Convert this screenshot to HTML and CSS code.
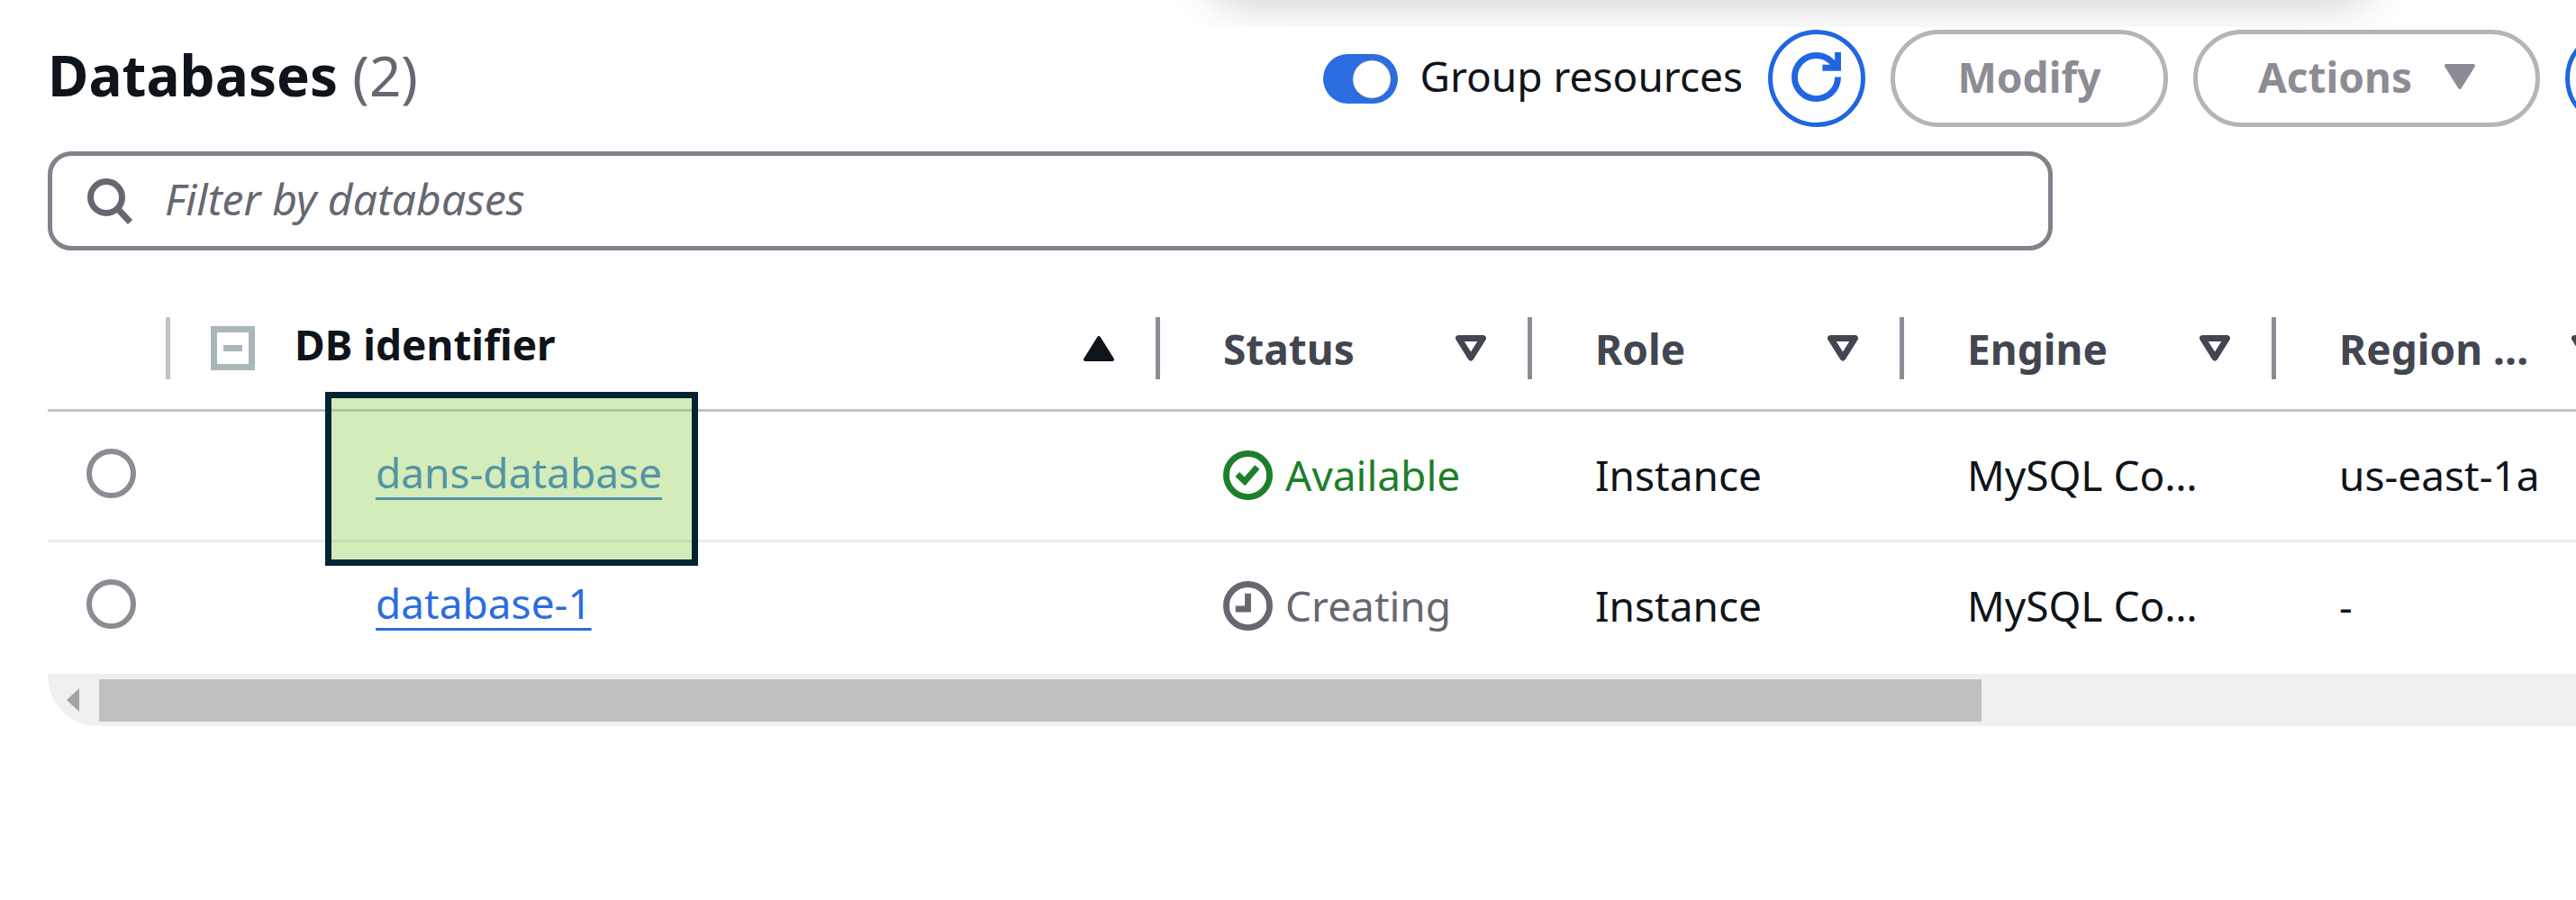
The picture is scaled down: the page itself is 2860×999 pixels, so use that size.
FILE: index.html
```html
<!DOCTYPE html>
<html lang="en">
<head>
<meta charset="utf-8">
<title>Databases</title>
<link rel="stylesheet" href="styles.css">
</head>
<body>
<svg class="sprite" aria-hidden="true">
  <symbol id="sort-down" viewBox="0 0 34 29"><path d="M3.500 3.500h27L17 25z" fill="none" stroke="currentColor" stroke-width="7" stroke-linejoin="round"/></symbol>
  <symbol id="caret-down" viewBox="0 0 34 29"><path d="M2 2h30L17 26z" fill="currentColor" stroke="currentColor" stroke-width="4" stroke-linejoin="round"/></symbol>
  <symbol id="caret-up" viewBox="0 0 34 29"><path d="M2 27h30L17 3z" fill="currentColor" stroke="currentColor" stroke-width="4" stroke-linejoin="round"/></symbol>
</svg>
<div class="shadow-clip" aria-hidden="true"><div class="shadow-card"></div></div>
<main class="panel">
  <header class="header">
    <h1 class="title">Databases <span class="count">(2)</span></h1>
    <div class="toolbar">
      <label class="toggle"><input class="toggle-input" type="checkbox" role="switch" checked><span class="toggle-text">Group resources</span></label>
      <button class="btn btn-primary btn-icon" type="button" aria-label="Refresh">
        <svg class="icon" viewBox="0 0 16 16" fill="none" stroke="currentColor" stroke-width="2"><path d="M15 8c0 3.870-3.130 7-7 7s-7-3.130-7-7 3.130-7 7-7c2.790 0 5.200 1.630 6.330 4M10 5h5V0"/></svg>
      </button>
      <button class="btn" type="button" disabled>Modify</button>
      <button class="btn" type="button" disabled>Actions <svg class="caret"><use href="#caret-down"/></svg></button>
      <button class="btn btn-primary btn-icon btn-cut" type="button" aria-label="Restore"></button>
    </div>
  </header>
  <label class="search">
    <svg class="search-icon" viewBox="0 0 50 51" fill="none" stroke="currentColor" stroke-width="7"><circle cx="21" cy="21" r="17.500"/><path d="M33 33l14.500 15.500"/></svg>
    <input class="search-input" type="text" placeholder="Filter by databases" aria-label="Filter by databases">
  </label>
  <table class="table">
    <colgroup><col class="col-select"><col><col class="col-data"><col class="col-data"><col class="col-data"><col class="col-data"></colgroup>
    <thead>
      <tr>
        <th><div class="head head-select"></div></th>
        <th>
          <div class="head head-id">
            <svg class="collapse" viewBox="0 0 49 49"><path d="M3.500 3.500h42v42h-42z" fill="none" stroke="currentColor" stroke-width="7"/><path d="M14 21h21v7H14z" fill="currentColor"/></svg>
            <span class="head-name">DB identifier</span>
            <svg class="caret"><use href="#caret-up"/></svg>
          </div>
        </th>
        <th><div class="head">Status <svg class="caret"><use href="#sort-down"/></svg></div></th>
        <th><div class="head">Role <svg class="caret"><use href="#sort-down"/></svg></div></th>
        <th><div class="head">Engine <svg class="caret"><use href="#sort-down"/></svg></div></th>
        <th><div class="head">Region … <svg class="caret"><use href="#sort-down"/></svg></div></th>
      </tr>
    </thead>
    <tbody>
      <tr>
        <td class="cell-select"><input class="radio" type="radio" name="db" aria-label="dans-database"></td>
        <td class="cell-id"><span class="marked"><a class="link" href="#">dans-database</a><span class="mark"></span></span></td>
        <td><span class="status status-ok"><svg class="icon" viewBox="0 0 16 16" fill="none" stroke="currentColor" stroke-width="2"><circle cx="8" cy="8" r="7"/><path d="M4.600 7.700L7 10l4-4.600"/></svg>Available</span></td>
        <td>Instance</td>
        <td>MySQL Co…</td>
        <td>us-east-1a</td>
      </tr>
      <tr>
        <td class="cell-select"><input class="radio" type="radio" name="db" aria-label="database-1"></td>
        <td class="cell-id"><a class="link" href="#">database-1</a></td>
        <td><span class="status status-busy"><svg class="icon" viewBox="0 0 16 16" fill="none" stroke="currentColor" stroke-width="2"><circle cx="8" cy="8" r="7"/><path d="M8 4v5H4"/></svg>Creating</span></td>
        <td>Instance</td>
        <td>MySQL Co…</td>
        <td>-</td>
      </tr>
    </tbody>
  </table>
  <div class="scrollbar" aria-hidden="true">
    <svg class="scroll-arrow" viewBox="0 0 14 26"><path d="M14 0v26L0 13z" fill="currentColor"/></svg>
    <div class="scroll-thumb"></div>
  </div>
</main>
</body>
</html>
```
FILE: styles.css
```css
* { box-sizing: border-box; }

body {
  margin: 0;
  background: #fff;
  color: #0f141a;
  font: 400 46px/60px "Noto Sans", "Open Sans", sans-serif;
  overflow-x: hidden;
}

.sprite { display: none; }

/* Shadow of the notification that sits above the panel */
.shadow-clip {
  position: absolute;
  inset: 0 0 auto;
  height: 30px;
  overflow: hidden;
}
.shadow-card {
  height: 100px;
  margin: -110px 8% 0 47%;
  border-radius: 40px;
  box-shadow: 0 8px 48px 6px rgba(0, 7, 22, 0.2);
}

.panel {
  position: relative;
  padding: 33px 0 0 53px;
  overflow: hidden;
}

.header {
  display: flex;
  justify-content: space-between;
  align-items: center;
  height: 108px;
}
.title {
  margin: 0;
  padding: 0 0 8px;
  font-size: 62px;
  line-height: 80px;
  font-weight: 700;
}
.count { color: #656871; font-weight: 400; }

.toolbar { display: flex; align-items: center; gap: 28px; }

.toggle { display: flex; align-items: center; gap: 24px; }
.toggle-text { padding-bottom: 6px; }
.toggle-input {
  appearance: none;
  flex: none;
  width: 83px;
  height: 55px;
  margin: 0;
  border-radius: 28px;
  background: radial-gradient(circle 22px at 54px 28px, #fff 20px, #1c4fae 22px, #2b6de0 22px);
}

.btn {
  display: flex;
  align-items: center;
  justify-content: center;
  gap: 36px;
  min-width: 308px;
  height: 108px;
  padding: 0 67px 4px;
  border: 5px solid #b4b4bb;
  border-radius: 54px;
  background: #fff;
  color: #8c8c94;
  font: inherit;
  font-weight: 700;
}
.btn-primary { border-color: #2065e2; color: #2065e2; }
.btn-icon { width: 108px; min-width: 0; padding: 0 0 4px; }
.btn-cut { margin-right: -96px; }

.icon { flex: none; width: 55px; height: 55px; }
.caret { flex: none; width: 34px; height: 29px; }

.search {
  display: flex;
  align-items: center;
  gap: 36px;
  width: calc(80% - 20px);
  height: 110px;
  margin-top: 27px;
  padding: 0 39px;
  border: 5px solid #82828b;
  border-radius: 26px;
}
.search-icon { flex: none; width: 50px; height: 51px; color: #656871; }
.search-input {
  flex: 1;
  min-width: 0;
  padding: 0 0 4px;
  border: 0;
  outline: 0;
  background: none;
  color: inherit;
  font: inherit;
  font-size: 48px;
}
.search-input::placeholder { color: #656871; font-style: italic; opacity: 1; }

/* The last column runs past the panel's right edge */
.table {
  width: calc(100% + 80px);
  margin-top: 74px;
  table-layout: fixed;
  border-collapse: separate;
  border-spacing: 0;
}
.col-select { width: 136px; }
.col-data { width: 413px; }

th {
  padding: 0 0 33px;
  border-bottom: 3px solid #c1c1c9;
  color: #424650;
  font-weight: 700;
  text-align: left;
  white-space: nowrap;
}
.head {
  display: flex;
  align-items: center;
  justify-content: space-between;
  height: 69px;
  padding: 0 46px 0 70px;
  border-right: 5px solid #8c8c94;
}
.head-select { border-color: #c1c1c9; }
.head-id { gap: 44px; padding-left: 45px; color: #0f141a; }
.head-name { flex: 1; padding-bottom: 10px; }
.collapse { flex: none; width: 49px; height: 49px; color: #aab7b8; }

td {
  height: 145px;
  padding: 0 0 2px 70px;
  border-bottom: 3px solid #ebebf0;
  white-space: nowrap;
}
tr:last-child td { border-bottom-color: transparent; }
.cell-select { padding: 0 0 6px 43px; }
.cell-id { padding: 0 0 8px 228px; }

.radio {
  appearance: none;
  display: block;
  width: 55px;
  height: 55px;
  margin: 0;
  border: 6px solid #8c8c94;
  border-radius: 50%;
}

.link {
  color: #2b6de0;
  text-decoration: underline;
  text-decoration-thickness: 3px;
  text-underline-offset: 10px;
  text-decoration-skip-ink: none;
}
.marked { position: relative; display: inline-block; }
.mark {
  position: absolute;
  inset: -59px -40px -74px -56px;
  border: 7px solid #042433;
  background: rgba(146, 208, 80, 0.4);
  pointer-events: none;
}

.status { display: flex; align-items: center; gap: 14px; }
.status-ok { color: #1d7f29; }
.status-busy { color: #656871; }

.scrollbar {
  display: flex;
  align-items: center;
  gap: 22px;
  height: 58px;
  margin-top: 1px;
  padding-left: 21px;
  border-bottom-left-radius: 56px;
  background: #f0f0f0;
}
.scroll-arrow { flex: none; width: 14px; height: 26px; color: #a3a3a3; }
.scroll-thumb { width: 75%; height: 47px; background: #c0c0c0; }
```
